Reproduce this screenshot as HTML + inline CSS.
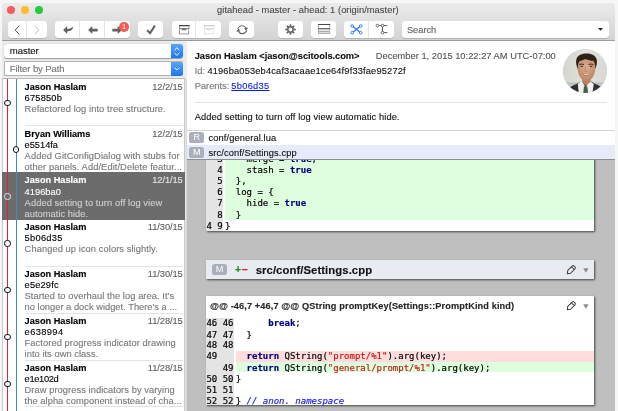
<!DOCTYPE html>
<html><head><meta charset="utf-8"><title>gitahead</title>
<style>
html,body{margin:0;padding:0}
body{width:618px;height:411px;overflow:hidden;background:#f6f6f6;position:relative;font-family:"Liberation Sans",sans-serif;font-size:9.3px;color:#111}
#win,#win *{position:absolute;box-sizing:border-box}
#win{left:2px;top:3px;width:613.4px;height:420px;border-radius:4.5px 4.5px 0 0;background:#fff;overflow:hidden;box-shadow:0 0 .6px rgba(0,0,0,.3);will-change:transform}
#tb{left:0;top:0;width:614px;height:38px;background:linear-gradient(#ebebeb,#d3d3d3);border-bottom:1px solid #9c9c9c}
.tl{width:8px;height:8px;border-radius:50%}
.btn{background:#fff;border-radius:3px;box-shadow:0 .5px .5px rgba(0,0,0,.3)}
.sep{top:0;width:1px;height:100%;background:#e4e4e4}
.t{white-space:pre;-webkit-text-stroke:0.12px}
.b{font-weight:bold}
.m{font-family:"DejaVu Sans Mono","Liberation Mono",monospace;-webkit-text-stroke:0.18px}
svg{overflow:visible}
</style></head><body>
<div id="win">
<div id="tb"></div>
<div class="tl" style="left:5.10px;top:2.90px;width:8.00px;height:8.00px;background:#fc5b57"></div>
<div class="tl" style="left:19.00px;top:2.90px;width:8.00px;height:8.00px;background:#fdbc2e"></div>
<div class="tl" style="left:32.70px;top:2.90px;width:8.00px;height:8.00px;background:#28c83f"></div>
<div class="t" style="left:215.10px;top:1.00px;font-size:9.3px;line-height:12px;color:#4a4a4a;letter-spacing:0.052px;">gitahead - master - ahead: 1 (origin/master)</div>
<div class="btn" style="left:5.80px;top:18.00px;width:39.10px;height:16.60px;"><div class="sep" style="left:18.20px"></div></div>
<div class="btn" style="left:53.20px;top:18.00px;width:74.60px;height:16.60px;"><div class="sep" style="left:24.00px"></div><div class="sep" style="left:48.90px"></div></div>
<div class="btn" style="left:136.00px;top:18.00px;width:25.00px;height:16.60px;"></div>
<div class="btn" style="left:169.50px;top:18.00px;width:49.50px;height:16.60px;"><div class="sep" style="left:23.80px"></div></div>
<div class="btn" style="left:227.30px;top:18.00px;width:25.00px;height:16.60px;"></div>
<div class="btn" style="left:275.80px;top:18.00px;width:25.00px;height:16.60px;"></div>
<div class="btn" style="left:309.00px;top:18.00px;width:25.00px;height:16.60px;"></div>
<div class="btn" style="left:342.00px;top:18.00px;width:49.50px;height:16.60px;"><div class="sep" style="left:24.30px"></div></div>
<div class="btn" style="left:400.40px;top:18.00px;width:206.70px;height:16.60px;"></div>
<div class="t" style="left:404.90px;top:21.00px;font-size:9.3px;line-height:12px;color:#646464;letter-spacing:-0.011px;">Search</div>
<svg style="left:12.00px;top:21.50px" width="6" height="10" viewBox="0 0 6 10"><path d="M5 1 L1.2 5 L5 9" fill="none" stroke="#4a4a4a" stroke-width="0.95" stroke-linecap="round" stroke-linejoin="round"/></svg>
<svg style="left:32.00px;top:21.50px" width="6" height="10" viewBox="0 0 6 10"><path d="M1 1 L4.8 5 L1 9" fill="none" stroke="#c2c2c2" stroke-width="0.95" stroke-linecap="round" stroke-linejoin="round"/></svg>
<svg style="left:60.50px;top:22.70px" width="11" height="8.4" viewBox="0 0 11 8.4"><path d="M0.1 4.1 L4.3 0.1 L4.1 2.9 C6.6 2.9 8.8 2.2 10.4 0.6 C10 3.8 7.4 5.5 4.1 5.5 L4.3 8.1 Z" fill="#626262"/></svg>
<svg style="left:85.50px;top:22.70px" width="10" height="8.4" viewBox="0 0 10 8.4"><path d="M0.1 4.1 L4.3 0.1 L4.3 2.8 L9.7 2.8 L9.7 5.4 L4.3 5.4 L4.3 8.1 Z" fill="#626262"/></svg>
<svg style="left:110.30px;top:22.70px" width="10" height="8.4" viewBox="0 0 10 8.4"><path d="M9.9 4.1 L5.7 0.1 L5.7 2.8 L0.3 2.8 L0.3 5.4 L5.7 5.4 L5.7 8.1 Z" fill="#626262"/></svg>
<div style="left:117.30px;top:19.30px;width:9.60px;height:9.60px;background:#f65853;border-radius:50%;color:#fff;font-size:7.4px;line-height:9.8px;text-align:center">1</div>
<svg style="left:143.80px;top:21.60px" width="11" height="10" viewBox="0 0 11 10"><path d="M1.1 5.3 L4.1 8.2 L8.9 0.6" fill="none" stroke="#626262" stroke-width="2.1" stroke-linejoin="miter"/></svg>
<svg style="left:176.90px;top:21.60px" width="10.4" height="9.4" viewBox="0 0 10.4 9.4"><rect x="0.35" y="0.6" width="9.7" height="3" fill="none" stroke="#777" stroke-width="0.7"/><rect x="0.65" y="3.6" width="9.1" height="5.3" fill="none" stroke="#777" stroke-width="0.7"/><path d="M0 0.6 H10.4" stroke="#444" stroke-width="1.1"/><path d="M2.6 4.7 H7.6" stroke="#444" stroke-width="0.9"/></svg>
<svg style="left:201.70px;top:21.60px" width="10.4" height="9.4" viewBox="0 0 10.4 9.4"><rect x="0.35" y="0.6" width="9.7" height="3" fill="none" stroke="#dcdcdc" stroke-width="0.7"/><rect x="0.65" y="3.6" width="9.1" height="5.3" fill="none" stroke="#dcdcdc" stroke-width="0.7"/><path d="M0 0.6 H10.4" stroke="#cdcdcd" stroke-width="1.1"/><path d="M2.6 4.7 H7.6" stroke="#cdcdcd" stroke-width="0.9"/></svg>
<svg style="left:233.60px;top:20.90px" width="12.4" height="11.3" viewBox="0 0 11 10"><path d="M1.5 4.4 A4 4 0 0 1 8.9 3.6" fill="none" stroke="#626262" stroke-width="0.85"/><path d="M9.5 5.6 A4 4 0 0 1 2.1 6.4" fill="none" stroke="#626262" stroke-width="0.95"/><path d="M10.9 3.4 L8.7 6 L7.2 3.3 Z" fill="#626262"/><path d="M0.1 6.6 L2.3 4 L3.8 6.7 Z" fill="#626262"/></svg>
<svg style="left:282.60px;top:20.70px" width="11" height="11" viewBox="0 0 11 11"><g transform="translate(5.5 5.5)"><path d="M-0.95 -3 L-0.7 -5.3 L0.7 -5.3 L0.95 -3 Z" transform="rotate(0)" fill="#626262"/><path d="M-0.95 -3 L-0.7 -5.3 L0.7 -5.3 L0.95 -3 Z" transform="rotate(45)" fill="#626262"/><path d="M-0.95 -3 L-0.7 -5.3 L0.7 -5.3 L0.95 -3 Z" transform="rotate(90)" fill="#626262"/><path d="M-0.95 -3 L-0.7 -5.3 L0.7 -5.3 L0.95 -3 Z" transform="rotate(135)" fill="#626262"/><path d="M-0.95 -3 L-0.7 -5.3 L0.7 -5.3 L0.95 -3 Z" transform="rotate(180)" fill="#626262"/><path d="M-0.95 -3 L-0.7 -5.3 L0.7 -5.3 L0.95 -3 Z" transform="rotate(225)" fill="#626262"/><path d="M-0.95 -3 L-0.7 -5.3 L0.7 -5.3 L0.95 -3 Z" transform="rotate(270)" fill="#626262"/><path d="M-0.95 -3 L-0.7 -5.3 L0.7 -5.3 L0.95 -3 Z" transform="rotate(315)" fill="#626262"/><circle r="2.7" fill="none" stroke="#626262" stroke-width="1.5"/></g></svg>
<svg style="left:315.80px;top:21.10px" width="12.2" height="9.8" viewBox="0 0 12.2 9.8"><rect x="0.4" y="0.5" width="11.4" height="8.8" fill="#fff" stroke="#8a8a8a" stroke-width="0.7"/><rect x="0.9" y="5.2" width="10.4" height="3.6" fill="#e6e6e6"/><path d="M0.9 7.7 H11.3" stroke="#9a9a9a" stroke-width="0.9"/><path d="M0 0.5 H12.2 M0.2 4.7 H12" stroke="#4a4a4a" stroke-width="1"/></svg>
<svg style="left:348.00px;top:20.00px" width="13" height="13" viewBox="0 0 13 13"><path d="M2.2 3 L10.7 9.8 M10.7 3 L2.2 9.8" stroke="#2f7df6" stroke-width="1.25"/><circle cx="2.2" cy="3" r="1.35" fill="#fff" stroke="#2f7df6" stroke-width="0.95"/><circle cx="10.7" cy="3" r="1.35" fill="#fff" stroke="#2f7df6" stroke-width="0.95"/><circle cx="2.2" cy="9.8" r="1.35" fill="#fff" stroke="#2f7df6" stroke-width="0.95"/><circle cx="10.7" cy="9.8" r="1.35" fill="#fff" stroke="#2f7df6" stroke-width="0.95"/></svg>
<svg style="left:373.00px;top:20.00px" width="14" height="13" viewBox="0 0 14 13"><path d="M2.4 2.6 H12.4 M7.5 2.6 V9.6 H12.4" fill="none" stroke="#5c5c5c" stroke-width="1"/><circle cx="2.4" cy="2.6" r="1.35" fill="#fff" stroke="#5c5c5c" stroke-width="0.9"/><circle cx="7.5" cy="2.6" r="1.35" fill="#fff" stroke="#5c5c5c" stroke-width="0.9"/><circle cx="7.5" cy="9.6" r="1.35" fill="#fff" stroke="#5c5c5c" stroke-width="0.9"/></svg>
<svg style="left:595.50px;top:25.20px" width="5" height="3" viewBox="0 0 5 3"><path d="M0 0 H5 L2.5 2.8 Z" fill="#222"/></svg>
<div style="left:0.00px;top:38.00px;width:185.20px;height:380.00px;background:#ececec"></div>
<div style="left:2.00px;top:41.00px;width:179.00px;height:14.00px;background:#fff;border-radius:3px;box-shadow:0 .5px 1px rgba(0,0,0,.35)"></div>
<div style="left:169.30px;top:41.00px;width:11.70px;height:14.00px;background:linear-gradient(#5aa5f8,#1a76f2);border-radius:0 3px 3px 0"></div>
<div class="t" style="left:7.80px;top:42.00px;font-size:9.6px;line-height:12px;color:#111;letter-spacing:-0.088px;">master</div>
<div style="left:2.00px;top:58.30px;width:179.00px;height:14.30px;background:#fff;border:1px solid #b0b0b0;border-radius:1px"></div>
<div style="left:169.30px;top:58.50px;width:11.70px;height:14.00px;background:linear-gradient(#5aa5f8,#1a76f2);border-radius:0 3px 3px 0"></div>
<div class="t" style="left:7.80px;top:60.00px;font-size:9.6px;line-height:12px;color:#777;letter-spacing:-0.124px;">Filter by Path</div>
<svg style="left:172.40px;top:43.60px" width="5.8" height="9.2" viewBox="0 0 5.8 9.2"><path d="M0.7 2.9 L2.9 0.8 L5.1 2.9 M0.7 6.3 L2.9 8.4 L5.1 6.3" fill="none" stroke="#fff" stroke-width="0.95" stroke-linecap="round" stroke-linejoin="round"/></svg>
<svg style="left:172.40px;top:63.80px" width="5.8" height="4" viewBox="0 0 5.8 4"><path d="M0.7 0.8 L2.9 3 L5.1 0.8" fill="none" stroke="#fff" stroke-width="0.95" stroke-linecap="round" stroke-linejoin="round"/></svg>
<div style="left:0.00px;top:75.00px;width:183.00px;height:340.00px;background:#fff;border-top:1px solid #b9b9b9;border-right:1px solid #c9c9c9;border-left:1px solid #c6c6c6"></div>
<div style="left:0.00px;top:169.14px;width:182.50px;height:47.77px;background:#6c6c6c"></div>
<div class="t b" style="left:22.60px;top:78.00px;font-size:9.2px;line-height:12px;color:#000;">Jason Haslam</div>
<div class="t" style="left:150.20px;top:78.00px;font-size:9.3px;line-height:12px;color:#5e5e5e;letter-spacing:-0.075px;">12/2/15</div>
<div class="t" style="left:22.60px;top:89.00px;font-size:9.3px;line-height:12px;color:#000;letter-spacing:0.185px;">675850b</div>
<div class="t" style="left:22.60px;top:100.00px;font-size:9.3px;line-height:12px;color:#787878;letter-spacing:0.092px;">Refactored log into tree structure.</div>
<div style="left:22.50px;top:122.17px;width:158.20px;height:1.00px;background:#e3e3e3"></div>
<div class="t b" style="left:22.60px;top:125.00px;font-size:9.2px;line-height:12px;color:#000;">Bryan Williams</div>
<div class="t" style="left:150.20px;top:125.00px;font-size:9.3px;line-height:12px;color:#5e5e5e;letter-spacing:-0.075px;">12/2/15</div>
<div class="t" style="left:22.60px;top:136.00px;font-size:9.3px;line-height:12px;color:#000;letter-spacing:-0.030px;">e5514fa</div>
<div class="t" style="left:22.60px;top:147.00px;font-size:9.3px;line-height:12px;color:#787878;letter-spacing:0.085px;">Added GitConfigDialog with stubs for</div>
<div class="t" style="left:22.60px;top:158.00px;font-size:9.3px;line-height:12px;color:#787878;letter-spacing:0.086px;">other panels. Add/Edit/Delete featur...</div>
<div class="t b" style="left:22.60px;top:171.00px;font-size:9.2px;line-height:12px;color:#fff;">Jason Haslam</div>
<div class="t" style="left:150.20px;top:171.00px;font-size:9.3px;line-height:12px;color:#e6e6e6;letter-spacing:-0.075px;">12/1/15</div>
<div class="t" style="left:22.60px;top:183.00px;font-size:9.3px;line-height:12px;color:#fff;letter-spacing:0.014px;">4196ba0</div>
<div class="t" style="left:22.60px;top:194.00px;font-size:9.3px;line-height:12px;color:#d0d0d0;letter-spacing:0.088px;">Added setting to turn off log view</div>
<div class="t" style="left:22.60px;top:205.00px;font-size:9.3px;line-height:12px;color:#d0d0d0;letter-spacing:0.029px;">automatic hide.</div>
<div class="t b" style="left:22.60px;top:218.00px;font-size:9.2px;line-height:12px;color:#000;">Jason Haslam</div>
<div class="t" style="left:145.80px;top:218.00px;font-size:9.3px;line-height:12px;color:#5e5e5e;letter-spacing:-0.075px;">11/30/15</div>
<div class="t" style="left:22.60px;top:229.00px;font-size:9.3px;line-height:12px;color:#000;letter-spacing:0.257px;">5b06d35</div>
<div class="t" style="left:22.60px;top:240.00px;font-size:9.3px;line-height:12px;color:#787878;letter-spacing:0.082px;">Changed up icon colors slightly.</div>
<div style="left:22.50px;top:262.78px;width:158.20px;height:1.00px;background:#e3e3e3"></div>
<div class="t b" style="left:22.60px;top:265.00px;font-size:9.2px;line-height:12px;color:#000;">Jason Haslam</div>
<div class="t" style="left:145.80px;top:265.00px;font-size:9.3px;line-height:12px;color:#5e5e5e;letter-spacing:-0.075px;">11/30/15</div>
<div class="t" style="left:22.60px;top:276.00px;font-size:9.3px;line-height:12px;color:#000;letter-spacing:0.144px;">e5e29fc</div>
<div class="t" style="left:22.60px;top:287.00px;font-size:9.3px;line-height:12px;color:#787878;letter-spacing:0.068px;">Started to overhaul the log area. It's</div>
<div class="t" style="left:22.60px;top:298.00px;font-size:9.3px;line-height:12px;color:#787878;letter-spacing:0.016px;">no longer a dock widget. There's a ...</div>
<div style="left:22.50px;top:309.65px;width:158.20px;height:1.00px;background:#e3e3e3"></div>
<div class="t b" style="left:22.60px;top:312.00px;font-size:9.2px;line-height:12px;color:#000;">Jason Haslam</div>
<div class="t" style="left:145.80px;top:312.00px;font-size:9.3px;line-height:12px;color:#5e5e5e;letter-spacing:-0.075px;">11/28/15</div>
<div class="t" style="left:22.60px;top:323.00px;font-size:9.3px;line-height:12px;color:#000;letter-spacing:0.385px;">e638994</div>
<div class="t" style="left:22.60px;top:334.00px;font-size:9.3px;line-height:12px;color:#787878;letter-spacing:0.080px;">Factored progress indicator drawing</div>
<div class="t" style="left:22.60px;top:345.00px;font-size:9.3px;line-height:12px;color:#787878;letter-spacing:0.044px;">into its own class.</div>
<div style="left:22.50px;top:356.52px;width:158.20px;height:1.00px;background:#e3e3e3"></div>
<div class="t b" style="left:22.60px;top:359.00px;font-size:9.2px;line-height:12px;color:#000;">Jason Haslam</div>
<div class="t" style="left:145.80px;top:359.00px;font-size:9.3px;line-height:12px;color:#5e5e5e;letter-spacing:-0.075px;">11/28/15</div>
<div class="t" style="left:22.60px;top:370.00px;font-size:9.3px;line-height:12px;color:#000;letter-spacing:-0.343px;">e1e102d</div>
<div class="t" style="left:22.60px;top:381.00px;font-size:9.3px;line-height:12px;color:#787878;letter-spacing:0.066px;">Draw progress indicators by varying</div>
<div class="t" style="left:22.60px;top:392.00px;font-size:9.3px;line-height:12px;color:#787878;letter-spacing:0.055px;">the alpha component instead of cha...</div>
<div style="left:22.50px;top:403.39px;width:158.20px;height:1.00px;background:#e3e3e3"></div>
<div style="left:5.00px;top:75.50px;width:1.10px;height:340.00px;background:#d9243c"></div>
<div style="left:13.80px;top:75.50px;width:1.10px;height:340.00px;background:#4a86c5"></div>
<div style="left:2.30px;top:96.50px;width:6.40px;height:6.40px;border-radius:50%;border:1.2px solid #111;background:#fff"></div>
<div style="left:11.10px;top:143.37px;width:6.40px;height:6.40px;border-radius:50%;border:1.2px solid #111;background:#fff"></div>
<div style="left:2.30px;top:190.24px;width:6.40px;height:6.40px;border-radius:50%;border:1.2px solid #e4e4e4;background:#6c6c6c"></div>
<div style="left:2.30px;top:237.11px;width:6.40px;height:6.40px;border-radius:50%;border:1.2px solid #111;background:#fff"></div>
<div style="left:2.30px;top:283.98px;width:6.40px;height:6.40px;border-radius:50%;border:1.2px solid #111;background:#fff"></div>
<div style="left:2.30px;top:330.85px;width:6.40px;height:6.40px;border-radius:50%;border:1.2px solid #111;background:#fff"></div>
<div style="left:2.30px;top:377.72px;width:6.40px;height:6.40px;border-radius:50%;border:1.2px solid #111;background:#fff"></div>
<div class="t b" style="left:192.70px;top:47.00px;font-size:9.3px;line-height:12px;color:#111;letter-spacing:-0.041px;">Jason Haslam &lt;jason@scitools.com&gt;</div>
<div class="t" style="left:373.80px;top:47.00px;font-size:9.3px;line-height:12px;color:#555;letter-spacing:0.018px;">December 1, 2015 10:22:27 AM UTC-07:00</div>
<div class="t" style="left:192.70px;top:62.00px;font-size:9.3px;line-height:12px;color:#777;">Id:</div>
<div class="t" style="left:205.40px;top:62.00px;font-size:9.3px;line-height:12px;color:#111;letter-spacing:0.152px;">4196ba053eb4caf3acaae1ce64f9f33fae95272f</div>
<div class="t" style="left:192.70px;top:77.00px;font-size:9.3px;line-height:12px;color:#777;">Parents:</div>
<div class="t" style="left:229.30px;top:77.00px;font-size:9.3px;line-height:12px;color:#0a1fe8;letter-spacing:0.285px;text-decoration:underline;">5b06d35</div>
<div style="left:192.70px;top:99.00px;width:412.60px;height:1.00px;background:#e2e2e2"></div>
<div class="t" style="left:192.70px;top:108.00px;font-size:9.3px;line-height:12px;color:#111;letter-spacing:0.091px;">Added setting to turn off log view automatic hide.</div>
<div style="left:561.00px;top:46.20px;width:44.20px;height:44.20px;border-radius:50%;overflow:hidden;background:#d9d9d6"><svg width="44.2" height="44.2" viewBox="0 0 44.2 44.2">
<defs><linearGradient id="bgp" x1="0" y1="0" x2="1" y2="0"><stop offset="0" stop-color="#d3d6cf"/><stop offset="0.5" stop-color="#e2e1dc"/><stop offset="1" stop-color="#d8d7d3"/></linearGradient>
<filter id="bl" x="-10%" y="-10%" width="120%" height="120%"><feGaussianBlur stdDeviation="0.45"/></filter>
<radialGradient id="sk" cx="50%" cy="45%" r="60%"><stop offset="0" stop-color="#dcae92"/><stop offset="1" stop-color="#b98466"/></radialGradient></defs>
<rect width="44.2" height="44.2" fill="url(#bgp)"/>
<g filter="url(#bl)">
<rect x="0" y="33.5" width="44.2" height="3" fill="#b9c0c6"/>
<rect x="0" y="36.5" width="44.2" height="8" fill="#cfd0cc"/>
<path d="M1 44.2 C4 39 9 37 14.5 34.6 L18 32.5 L28.5 32.5 L31.5 34.6 C37 37 41 39 43 44.2 Z" fill="#2e2f34"/>
<path d="M14.8 35 L18.6 31.8 L22.6 38 L26.8 31.8 L30.8 35 L29.4 44.2 L15.8 44.2 Z" fill="#f1f0ee"/>
<path d="M21 37.2 L24.3 37.2 L25.2 44.2 L20.2 44.2 Z" fill="#45604c"/>
<path d="M19 26 L28 26 L27.6 33 L22.8 36.6 L19.2 33 Z" fill="#b88364"/>
<path d="M14.6 18 C14 9 18 7.6 23.4 7.6 C29 7.6 32.8 9.5 32.3 18 C32.6 25 29.5 31.8 23.4 31.9 C17.5 31.8 14.4 25 14.6 18 Z" fill="url(#sk)"/>
<path d="M14.9 20.5 C13.4 17 12.4 12.5 13.6 9.6 C15.2 5.6 19.5 4.3 23.5 4.4 C28 4.5 32.2 6 33.6 10 C34.6 13.2 33.4 17.2 32.2 20.3 C32.3 16.5 32 13.6 30.6 11.8 C28 11.8 25 11.2 22.5 10 C20 11 18 11.8 16.4 12.2 C15 14 14.7 17 14.9 20.5 Z" fill="#2e2119"/>
<path d="M16.4 15.6 Q18.6 14.5 21 15.5 M25.6 15.5 Q28 14.5 30.3 15.6" stroke="#3a281d" stroke-width="1" fill="none"/>
<ellipse cx="18.8" cy="17.4" rx="1.3" ry="0.7" fill="#4a3428"/><ellipse cx="28" cy="17.4" rx="1.3" ry="0.7" fill="#4a3428"/>
<path d="M22.6 18 L22 22.4 L24.8 22.4" stroke="#b07a5c" stroke-width="0.7" fill="none"/>
<path d="M19.2 24.6 Q23.4 25.6 27.6 24.6 Q23.4 29 19.2 24.6 Z" fill="#8a4a3c"/>
<path d="M20 24.9 Q23.4 25.7 26.8 24.9 Q23.4 27.4 20 24.9 Z" fill="#fbf7f2"/>
</g>
</svg></div>
<div style="left:185.20px;top:126.80px;width:430.00px;height:30.00px;background:#fff;border-top:1px solid #d4d4d4"></div>
<div style="left:185.20px;top:142.00px;width:430.00px;height:14.00px;background:#e5ebfa"></div>
<div style="left:185.20px;top:155.80px;width:430.00px;height:1.00px;background:#8e8e8e"></div>
<div style="left:187.40px;top:129.40px;width:14.90px;height:11.00px;background:#aaafbb;border-radius:2.6px;color:#fff;font-size:9.2px;line-height:11.4px;text-align:center">R</div>
<div style="left:187.40px;top:143.90px;width:14.90px;height:11.00px;background:#aaafbb;border-radius:2.6px;color:#fff;font-size:9.2px;line-height:11.4px;text-align:center">M</div>
<div class="t" style="left:206.60px;top:129.00px;font-size:9.3px;line-height:12px;color:#111;letter-spacing:0.090px;">conf/general.lua</div>
<div class="t" style="left:206.60px;top:144.00px;font-size:9.3px;line-height:12px;color:#111;letter-spacing:0.090px;">src/conf/Settings.cpp</div>
<div style="left:185.00px;top:157.00px;width:430.00px;height:260.00px;background:#bfbfbf;overflow:hidden"><div style="left:19.40px;top:-40.00px;width:387.40px;height:111.00px;background:#fff;box-shadow:0.6px 1px 2px rgba(0,0,0,.65);"></div>
<div style="left:19.40px;top:-40.00px;width:16.20px;height:111.00px;background:#e4e4e4"></div>
<div style="left:38.00px;top:-40.00px;width:368.80px;height:99.50px;background:#ddffdd"></div>
<div class="t m" style="left:30.20px;top:-7.00px;font-size:9px;line-height:12px;color:#000;">3</div>
<div class="t m" style="left:59.57px;top:-7.00px;font-size:9px;line-height:12px;color:#000;">merge = </div><div class="t m" style="left:102.92px;top:-7.00px;font-size:9px;line-height:12px;color:#000080;font-weight:bold;">true</div><div class="t m" style="left:124.59px;top:-7.00px;font-size:9px;line-height:12px;color:#000;">,</div>
<div class="t m" style="left:30.20px;top:4.00px;font-size:9px;line-height:12px;color:#000;">4</div>
<div class="t m" style="left:59.57px;top:4.00px;font-size:9px;line-height:12px;color:#000;">stash = </div><div class="t m" style="left:102.92px;top:4.00px;font-size:9px;line-height:12px;color:#000080;font-weight:bold;">true</div>
<div class="t m" style="left:30.20px;top:15.00px;font-size:9px;line-height:12px;color:#000;">5</div>
<div class="t m" style="left:48.74px;top:15.00px;font-size:9px;line-height:12px;color:#000;">},</div>
<div class="t m" style="left:30.20px;top:26.00px;font-size:9px;line-height:12px;color:#000;">6</div>
<div class="t m" style="left:48.74px;top:26.00px;font-size:9px;line-height:12px;color:#000;">log = {</div>
<div class="t m" style="left:30.20px;top:37.00px;font-size:9px;line-height:12px;color:#000;">7</div>
<div class="t m" style="left:59.57px;top:37.00px;font-size:9px;line-height:12px;color:#000;">hide = </div><div class="t m" style="left:97.50px;top:37.00px;font-size:9px;line-height:12px;color:#000080;font-weight:bold;">true</div>
<div class="t m" style="left:30.20px;top:49.00px;font-size:9px;line-height:12px;color:#000;">8</div>
<div class="t m" style="left:48.74px;top:49.00px;font-size:9px;line-height:12px;color:#000;">}</div>
<div class="t m" style="left:19.60px;top:60.00px;font-size:9px;line-height:12px;color:#000;">4</div>
<div class="t m" style="left:30.20px;top:60.00px;font-size:9px;line-height:12px;color:#000;">9</div>
<div class="t m" style="left:37.90px;top:60.00px;font-size:9px;line-height:12px;color:#000;">}</div>
<div style="left:19.40px;top:100.00px;width:387.40px;height:19.00px;background:#e9ebf2;box-shadow:0.6px 1px 2px rgba(0,0,0,.65);"></div>
<div style="left:25.10px;top:103.60px;width:14.90px;height:11.20px;background:#aaafbb;border-radius:2.6px;color:#fff;font-size:9.2px;line-height:11.6px;text-align:center">M</div>
<div class="t b" style="left:47.90px;top:102.00px;font-size:10.5px;line-height:14px;color:#188a18;">+</div>
<div class="t b" style="left:54.60px;top:102.00px;font-size:10.5px;line-height:14px;color:#e81c24;">−</div>
<div class="t b" style="left:68.70px;top:103.00px;font-size:11.3px;line-height:15px;color:#111;letter-spacing:0.077px;">src/conf/Settings.cpp</div>
<div style="left:19.40px;top:136.30px;width:387.40px;height:109.00px;background:#fff;box-shadow:0.6px 1px 2px rgba(0,0,0,.65);"></div>
<div class="t b" style="left:22.90px;top:140.00px;font-size:9.2px;line-height:12px;color:#262626;letter-spacing:0.110px;">@@ -46,7 +46,7 @@ QString promptKey(Settings::PromptKind kind)</div>
<div style="left:19.40px;top:157.80px;width:27.20px;height:87.50px;background:#e4e4e4"></div>
<div style="left:49.00px;top:191.10px;width:357.80px;height:10.60px;background:#ffdddd"></div>
<div style="left:49.00px;top:201.70px;width:357.80px;height:10.60px;background:#ddffdd"></div>
<div class="t m" style="left:19.40px;top:157.00px;font-size:9px;line-height:12px;color:#000;">46</div>
<div class="t m" style="left:35.70px;top:157.00px;font-size:9px;line-height:12px;color:#000;">46</div>
<div class="t m" style="left:81.24px;top:157.00px;font-size:9px;line-height:12px;color:#000080;font-weight:bold;">break</div><div class="t m" style="left:108.33px;top:157.00px;font-size:9px;line-height:12px;color:#000;">;</div>
<div class="t m" style="left:19.40px;top:169.00px;font-size:9px;line-height:12px;color:#000;">47</div>
<div class="t m" style="left:35.70px;top:169.00px;font-size:9px;line-height:12px;color:#000;">47</div>
<div class="t m" style="left:59.57px;top:169.00px;font-size:9px;line-height:12px;color:#000;">}</div>
<div class="t m" style="left:19.40px;top:179.00px;font-size:9px;line-height:12px;color:#000;">48</div>
<div class="t m" style="left:35.70px;top:179.00px;font-size:9px;line-height:12px;color:#000;">48</div>
<div class="t m" style="left:19.40px;top:190.00px;font-size:9px;line-height:12px;color:#000;">49</div>
<div class="t m" style="left:59.57px;top:190.00px;font-size:9px;line-height:12px;color:#000080;font-weight:bold;">return</div><div class="t m" style="left:92.08px;top:190.00px;font-size:9px;line-height:12px;color:#000;"> QString(</div><div class="t m" style="left:140.84px;top:190.00px;font-size:9px;line-height:12px;color:#c41a16;">"prompt/%1"</div><div class="t m" style="left:200.44px;top:190.00px;font-size:9px;line-height:12px;color:#000;">).arg(key);</div>
<div class="t m" style="left:35.70px;top:202.00px;font-size:9px;line-height:12px;color:#000;">49</div>
<div class="t m" style="left:59.57px;top:202.00px;font-size:9px;line-height:12px;color:#000080;font-weight:bold;">return</div><div class="t m" style="left:92.08px;top:202.00px;font-size:9px;line-height:12px;color:#000;"> QString(</div><div class="t m" style="left:140.84px;top:202.00px;font-size:9px;line-height:12px;color:#c41a16;">"general/prompt/%1"</div><div class="t m" style="left:243.78px;top:202.00px;font-size:9px;line-height:12px;color:#000;">).arg(key);</div>
<div class="t m" style="left:19.40px;top:213.00px;font-size:9px;line-height:12px;color:#000;">50</div>
<div class="t m" style="left:35.70px;top:213.00px;font-size:9px;line-height:12px;color:#000;">50</div>
<div class="t m" style="left:48.74px;top:213.00px;font-size:9px;line-height:12px;color:#000;">}</div>
<div class="t m" style="left:19.40px;top:224.00px;font-size:9px;line-height:12px;color:#000;">51</div>
<div class="t m" style="left:35.70px;top:224.00px;font-size:9px;line-height:12px;color:#000;">51</div>
<div class="t m" style="left:19.40px;top:235.00px;font-size:9px;line-height:12px;color:#000;">52</div>
<div class="t m" style="left:35.70px;top:235.00px;font-size:9px;line-height:12px;color:#000;">52</div>
<div class="t m" style="left:48.74px;top:235.00px;font-size:9px;line-height:12px;color:#000;">}</div><div class="t m" style="left:54.15px;top:235.00px;font-size:9px;line-height:12px;color:#1a1aee;font-style:italic;"> // anon. namespace</div>
<svg style="left:378.30px;top:103.90px" width="12" height="12" viewBox="0 0 12 12"><g transform="translate(6 6) rotate(-45)"><path d="M-5.2 0 L-2.6 -2 L3.6 -2 Q5 -2 5 -0.6 L5 0.6 Q5 2 3.6 2 L-2.6 2 Z M2.6 -2 V2" fill="none" stroke="#3c3c3c" stroke-width="0.95" stroke-linejoin="round"/></g></svg>
<svg style="left:396.40px;top:107.60px" width="6" height="5" viewBox="0 0 6 5"><path d="M0.2 0.2 H5.6 L2.9 4.8 Z" fill="#8c8c8c"/></svg>
<svg style="left:378.30px;top:139.70px" width="12" height="12" viewBox="0 0 12 12"><g transform="translate(6 6) rotate(-45)"><path d="M-5.2 0 L-2.6 -2 L3.6 -2 Q5 -2 5 -0.6 L5 0.6 Q5 2 3.6 2 L-2.6 2 Z M2.6 -2 V2" fill="none" stroke="#3c3c3c" stroke-width="0.95" stroke-linejoin="round"/></g></svg>
<svg style="left:396.40px;top:143.50px" width="6" height="5" viewBox="0 0 6 5"><path d="M0.2 0.2 H5.6 L2.9 4.8 Z" fill="#8c8c8c"/></svg></div>
<div style="left:182.60px;top:75.50px;width:2.60px;height:340.00px;background:linear-gradient(90deg,#ebebeb,#d2d2d2)"></div>
</div></body></html>
